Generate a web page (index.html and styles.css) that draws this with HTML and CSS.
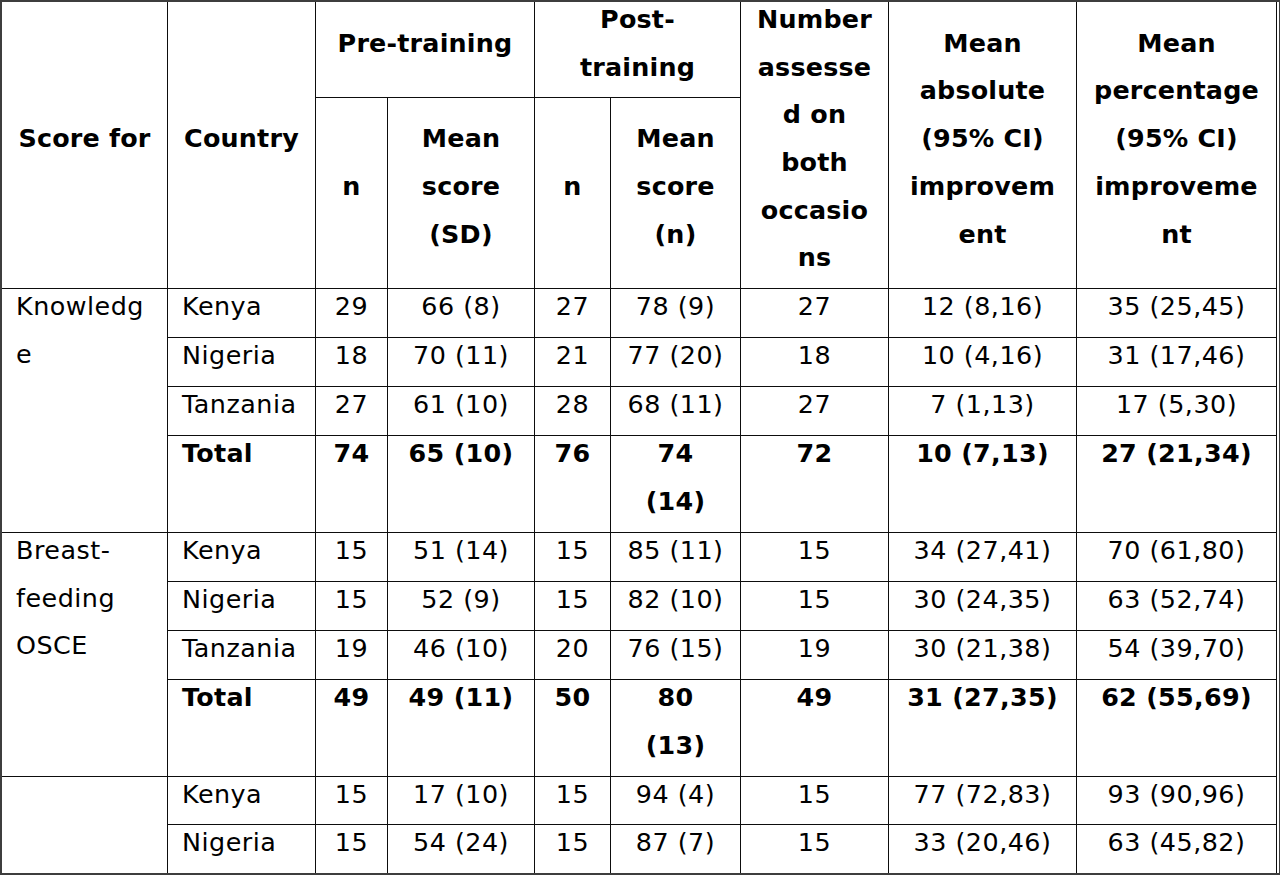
FILE: index.html
```html
<!DOCTYPE html>
<html lang="en">
<head>
<meta charset="utf-8">
<title>Scores before and after training</title>
<link rel="stylesheet" href="styles.css">
</head>
<body>
<div class="frame">
  <div class="grid">
    <div class="c h r2">Score for</div>
    <div class="c h r2">Country</div>
    <div class="c h s2">Pre-training</div>
    <div class="c h s2">Post-training</div>
    <div class="c h r2">Number assessed on both occasions</div>
    <div class="c h r2">Mean absolute (95% CI) improvement</div>
    <div class="c h r2">Mean percentage (95% CI) improvement</div>
    <div class="c h">n</div>
    <div class="c h">Mean score (SD)</div>
    <div class="c h">n</div>
    <div class="c h">Mean score (n)</div>

    <div class="c l r4">Knowledge</div>
    <div class="c l">Kenya</div><div class="c">29</div><div class="c">66 (8)</div><div class="c">27</div><div class="c">78 (9)</div><div class="c">27</div><div class="c">12 (8,16)</div><div class="c">35 (25,45)</div>
    <div class="c l">Nigeria</div><div class="c">18</div><div class="c">70 (11)</div><div class="c">21</div><div class="c">77 (20)</div><div class="c">18</div><div class="c">10 (4,16)</div><div class="c">31 (17,46)</div>
    <div class="c l">Tanzania</div><div class="c">27</div><div class="c">61 (10)</div><div class="c">28</div><div class="c">68 (11)</div><div class="c">27</div><div class="c">7 (1,13)</div><div class="c">17 (5,30)</div>
    <div class="c l b">Total</div><div class="c b">74</div><div class="c b">65 (10)</div><div class="c b">76</div><div class="c b">74 (14)</div><div class="c b">72</div><div class="c b">10 (7,13)</div><div class="c b">27 (21,34)</div>

    <div class="c l r4">Breast-feeding OSCE</div>
    <div class="c l">Kenya</div><div class="c">15</div><div class="c">51 (14)</div><div class="c">15</div><div class="c">85 (11)</div><div class="c">15</div><div class="c">34 (27,41)</div><div class="c">70 (61,80)</div>
    <div class="c l">Nigeria</div><div class="c">15</div><div class="c">52 (9)</div><div class="c">15</div><div class="c">82 (10)</div><div class="c">15</div><div class="c">30 (24,35)</div><div class="c">63 (52,74)</div>
    <div class="c l">Tanzania</div><div class="c">19</div><div class="c">46 (10)</div><div class="c">20</div><div class="c">76 (15)</div><div class="c">19</div><div class="c">30 (21,38)</div><div class="c">54 (39,70)</div>
    <div class="c l b">Total</div><div class="c b">49</div><div class="c b">49 (11)</div><div class="c b">50</div><div class="c b">80 (13)</div><div class="c b">49</div><div class="c b">31 (27,35)</div><div class="c b">62 (55,69)</div>

    <div class="c l r2"></div>
    <div class="c l">Kenya</div><div class="c">15</div><div class="c">17 (10)</div><div class="c">15</div><div class="c">94 (4)</div><div class="c">15</div><div class="c">77 (72,83)</div><div class="c">93 (90,96)</div>
    <div class="c l">Nigeria</div><div class="c">15</div><div class="c">54 (24)</div><div class="c">15</div><div class="c">87 (7)</div><div class="c">15</div><div class="c">33 (20,46)</div><div class="c">63 (45,82)</div>
  </div>
</div>
</body>
</html>
```

FILE: styles.css
```css
html, body {
  margin: 0;
  padding: 0;
  background: #ffffff;
  overflow: hidden;
}

.frame {
  box-sizing: border-box;
  width: 1280px;
  height: 875px;
  border: 2px solid #3d3d3d;
  border-right-width: 1px;
  background: #ffffff;
  overflow: hidden;
}

.grid {
  display: grid;
  width: 1274px;
  grid-template-columns: 165px 147px 71px 146px 75px 129px 147px 187px 199px;
  grid-template-rows: 95px 190px 48px 48px 48px 96px 48px 48px 48px 96px 47px 48px;
  gap: 1px;
  background: #0d0d0d;
  border-right: 1px solid #0d0d0d;
  font-family: "DejaVu Sans", Verdana, sans-serif;
  font-size: 25.4px;
  line-height: 47.7px;
  letter-spacing: 0.5px;
  color: #000000;
}

.c {
  background: #ffffff;
  padding: 0 14px;
  text-align: center;
  overflow-wrap: anywhere;
  overflow: hidden;
}

.c::before {
  content: "";
  display: block;
  margin-top: -6px;
}

.l {
  text-align: left;
}

.b {
  font-weight: bold;
  letter-spacing: 0.3px;
}

.h {
  font-weight: bold;
  letter-spacing: 0.2px;
  display: flex;
  flex-direction: column;
  align-items: center;
  justify-content: center;
  padding-bottom: 12px;
}

.h::before {
  display: none;
}

.r2 {
  grid-row: span 2;
}

.r4 {
  grid-row: span 4;
}

.s2 {
  grid-column: span 2;
}
```
